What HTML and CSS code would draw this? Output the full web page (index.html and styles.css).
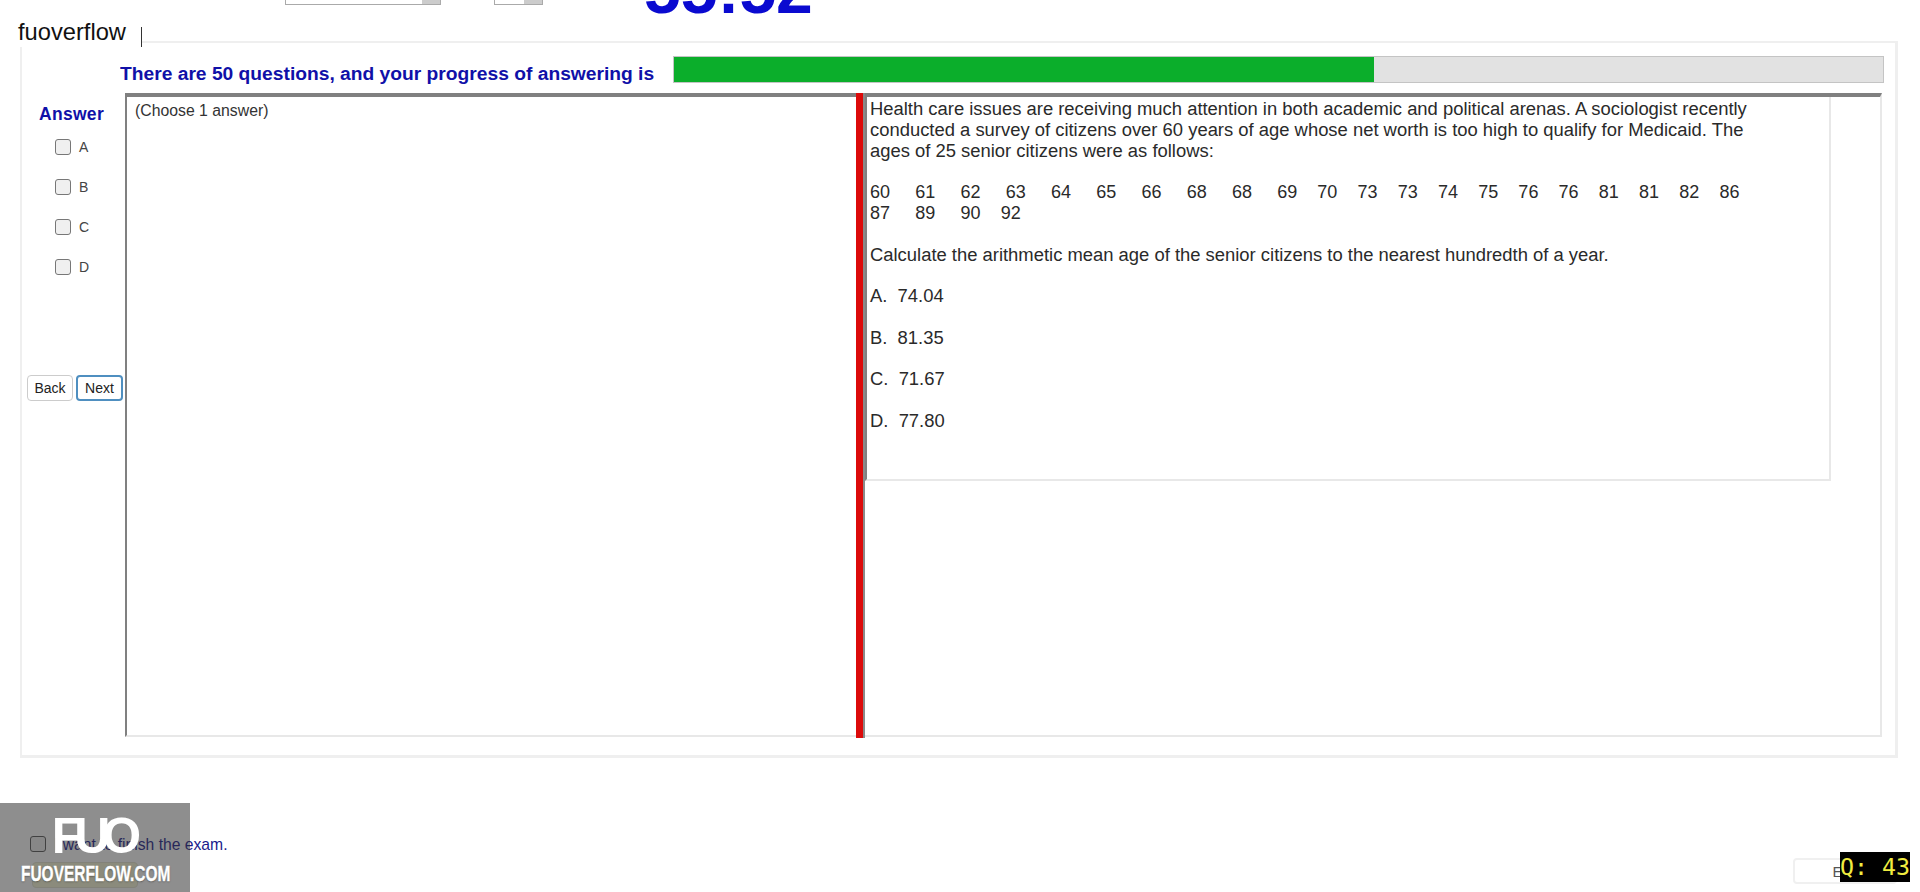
FILE: index.html
```html
<!DOCTYPE html>
<html lang="en">
<head>
    <meta charset="UTF-8">
    <meta name="viewport" content="width=device-width, initial-scale=1.0">
    <title>Exam</title>
    <link rel="stylesheet" href="styles.css">
</head>
<body>
    <div class="top-bar">
        <div class="select-box wide"><span class="select-arrow"></span></div>
        <div class="select-box narrow"><span class="select-arrow"></span></div>
        <div class="timer">55:52</div>
    </div>

    <div class="brand">fuoverflow <span class="brand-caret"></span></div>

    <div class="exam-panel">
        <div class="progress-row">
            <span class="progress-label">There are 50 questions, and your progress of answering is</span>
            <div class="progress-track"><div class="progress-fill" style="width: 57.9%;"></div></div>
        </div>

        <div class="exam-body">
            <div class="answer-col">
                <div class="answer-title">Answer</div>
                <label class="answer-item"><input type="checkbox"><span>A</span></label>
                <label class="answer-item"><input type="checkbox"><span>B</span></label>
                <label class="answer-item"><input type="checkbox"><span>C</span></label>
                <label class="answer-item"><input type="checkbox"><span>D</span></label>
                <div class="nav-buttons">
                    <button class="nav-btn">Back</button>
                    <button class="nav-btn active">Next</button>
                </div>
            </div>

            <div class="work-box">
                <div class="choose-pane">(Choose 1 answer)</div>
                <div class="splitter"></div>
                <div class="question-pane">
                    <div class="question">
                        <p>Health care issues are receiving much attention in both academic and political arenas. A sociologist recently conducted a survey of citizens over 60 years of age whose net worth is too high to qualify for Medicaid. The ages of 25 senior citizens were as follows:</p>
                        <p class="ages">60     61     62     63     64     65     66     68     68     69    70    73    73    74    75    76    76    81    81    82    86
87     89     90    92</p>
                        <p>Calculate the arithmetic mean age of the senior citizens to the nearest hundredth of a year.</p>
                        <p>A.  74.04</p>
                        <p>B.  81.35</p>
                        <p>C.  71.67</p>
                        <p>D.  77.80</p>
                    </div>
                </div>
            </div>
        </div>
    </div>

    <div class="footer-row">
        <div class="finish-col">
            <label class="finish-check"><input type="checkbox"><span>I want to finish the exam.</span></label>
            <button class="finish-btn"></button>
        </div>
        <button class="exit-btn">Exit</button>
    </div>

    <div class="watermark">
        <div class="watermark-logo">FUO</div>
        <div class="watermark-site">FUOVERFLOW.COM</div>
    </div>
    <div class="q-badge">Q: 43</div>
</body>
</html>
```

FILE: styles.css
```css
body {
    margin: 0;
    height: 892px;
    overflow: hidden;
    background-color: white;
    font-family: "Liberation Sans", Arial, sans-serif;
    color: #222;
    position: relative;
}

.top-bar {
    height: 22px;
    overflow: hidden;
    display: flex;
    align-items: flex-start;
    padding-left: 285px;
}

.select-box {
    height: 4px;
    margin-top: 0;
    border: 1px solid #aaa;
    border-top: none;
    display: flex;
    justify-content: flex-end;
}

.select-box.wide {
    width: 154px;
}

.select-box.narrow {
    width: 47px;
    margin-left: 53px;
}

.select-arrow {
    width: 18px;
    background-color: #ccc;
}

.timer {
    margin-left: 101px;
    margin-top: -33px;
    font-size: 66px;
    font-weight: bold;
    line-height: 46px;
    color: #0a0ad0;
}

.brand {
    position: absolute;
    left: 0;
    top: 20px;
    width: 142px;
    height: 27px;
    padding-left: 18px;
    box-sizing: border-box;
    background-color: white;
    font-size: 23.7px;
    line-height: 25px;
    color: #111;
}

.brand-caret {
    position: absolute;
    right: 0;
    top: 7px;
    height: 20px;
    border-left: 1px solid #333;
}

.exam-panel {
    margin: 19px 22px 0 20px;
    height: 712px;
    border: 2px solid #efefef;
    border-width: 2px 3px 3px 2px;
    padding-right: 13px;
}

.progress-row {
    display: flex;
    align-items: center;
    height: 27px;
    margin-top: 13px;
    margin-right: -2px;
    padding-left: 98px;
}

.progress-label {
    width: 553px;
    padding-top: 10px;
    font-size: 18px;
    font-weight: bold;
    color: #1010a8;
    white-space: nowrap;
    transform: scaleX(1.068);
    transform-origin: left;
}

.progress-track {
    flex: 1;
    height: 27px;
    box-sizing: border-box;
    background-color: #e2e2e2;
    border: 1px solid #c4c4c4;
}

.progress-fill {
    height: 100%;
    background-color: #0bae2b;
}

.exam-body {
    display: flex;
    margin-top: 10px;
}

.answer-col {
    width: 103px;
    flex-shrink: 0;
    position: relative;
    box-sizing: border-box;
}

.answer-title {
    padding-left: 17px;
    margin-top: 11px;
    font-size: 17.5px;
    letter-spacing: 0.3px;
    font-weight: bold;
    color: #1010a8;
    line-height: 20px;
}

.answer-item {
    display: flex;
    align-items: center;
    height: 40px;
    padding-left: 33px;
    font-size: 14px;
    color: #444;
}

.answer-title + .answer-item {
    margin-top: 3px;
}

.answer-item input {
    width: 16px;
    height: 16px;
    margin: 0 8px 0 0;
    appearance: none;
    background-color: #f0f0f0;
    border: 1.5px solid #777;
    border-radius: 3px;
}

.nav-buttons {
    display: flex;
    gap: 3px;
    margin-top: 88px;
    padding-left: 5px;
}

.nav-btn {
    width: 46px;
    height: 26px;
    padding: 0;
    background-color: white;
    border: 1px solid #ccc;
    border-radius: 4px;
    font-family: inherit;
    font-size: 14px;
    color: #222;
}

.nav-btn.active {
    width: 47px;
    border: 2px solid #4f8fc0;
}

.work-box {
    flex: 1;
    display: flex;
    height: 644px;
    box-sizing: border-box;
    border-top: 4px solid #808080;
    border-left: 2px solid #808080;
    border-right: 2px solid #e8e8e8;
    border-bottom: 2px solid #e8e8e8;
}

.choose-pane {
    width: 729px;
    flex-shrink: 0;
    padding: 4px 0 0 8px;
    box-sizing: border-box;
    font-size: 15.8px;
    line-height: 20px;
    color: #333;
}

.splitter {
    width: 7px;
    height: 645px;
    margin-top: -4px;
    flex-shrink: 0;
    background-color: #dc0a0a;
    border-right: 2px solid #8a8a8a;
}

.question-pane {
    flex: 1;
}

.question {
    width: 966px;
    height: 384px;
    box-sizing: border-box;
    padding: 2px 60px 0 3px;
    border-left: 2px solid #808080;
    border-right: 2px solid #e8e8e8;
    border-bottom: 2px solid #e8e8e8;
    font-size: 18.42px;
    line-height: 20.8px;
    color: #2a2a2a;
}

.question p {
    margin: 0 0 20.8px;
    white-space: pre-wrap;
}

.question .ages {
    font-size: 18px;
    letter-spacing: 0.03px;
    white-space: pre;
}

.footer-row {
    display: flex;
    justify-content: space-between;
    padding: 78px 23px 0 30px;
}

.finish-check {
    display: flex;
    align-items: center;
    font-size: 15.7px;
    color: #1a1a8c;
}

.finish-check input {
    width: 16px;
    height: 16px;
    margin: -3px 8px 0 0;
    appearance: none;
    background-color: #f0f0f0;
    border: 1.5px solid #555;
    border-radius: 3px;
}

.finish-btn {
    display: block;
    width: 106px;
    height: 26px;
    margin: 8px 0 0 2px;
    background-color: #f8f8d8;
    border: 1px solid #e4e4d0;
    border-radius: 4px;
}

.exit-btn {
    width: 104px;
    height: 26px;
    margin-top: 22px;
    background-color: white;
    border: 2px solid #f0f0f0;
    border-radius: 4px;
    font-family: inherit;
    font-size: 15px;
    color: #555;
}

.watermark {
    position: absolute;
    left: 0;
    top: 803px;
    width: 190px;
    height: 89px;
    background-color: rgba(50, 50, 50, 0.55);
    color: white;
    text-align: center;
    font-weight: bold;
    overflow: hidden;
}

.watermark-logo {
    margin-top: 8px;
    font-size: 50px;
    line-height: 50px;
    letter-spacing: -8px;
    padding-right: 5px;
}

.watermark-site {
    margin-top: 1px;
    padding-left: 21px;
    text-align: left;
    font-size: 22.5px;
    line-height: 24px;
    transform: scaleX(0.687);
    transform-origin: 21px 50%;
    white-space: nowrap;
    -webkit-text-stroke: 0.4px white;
    text-shadow: 0 1px 2px rgba(0, 0, 0, 0.4);
}

.q-badge {
    position: absolute;
    left: 1840px;
    top: 852px;
    width: 70px;
    height: 30px;
    background-color: black;
    color: #f0ec40;
    font-family: "DejaVu Sans Mono", monospace;
    font-size: 23.3px;
    line-height: 30px;
    white-space: nowrap;
}
```
